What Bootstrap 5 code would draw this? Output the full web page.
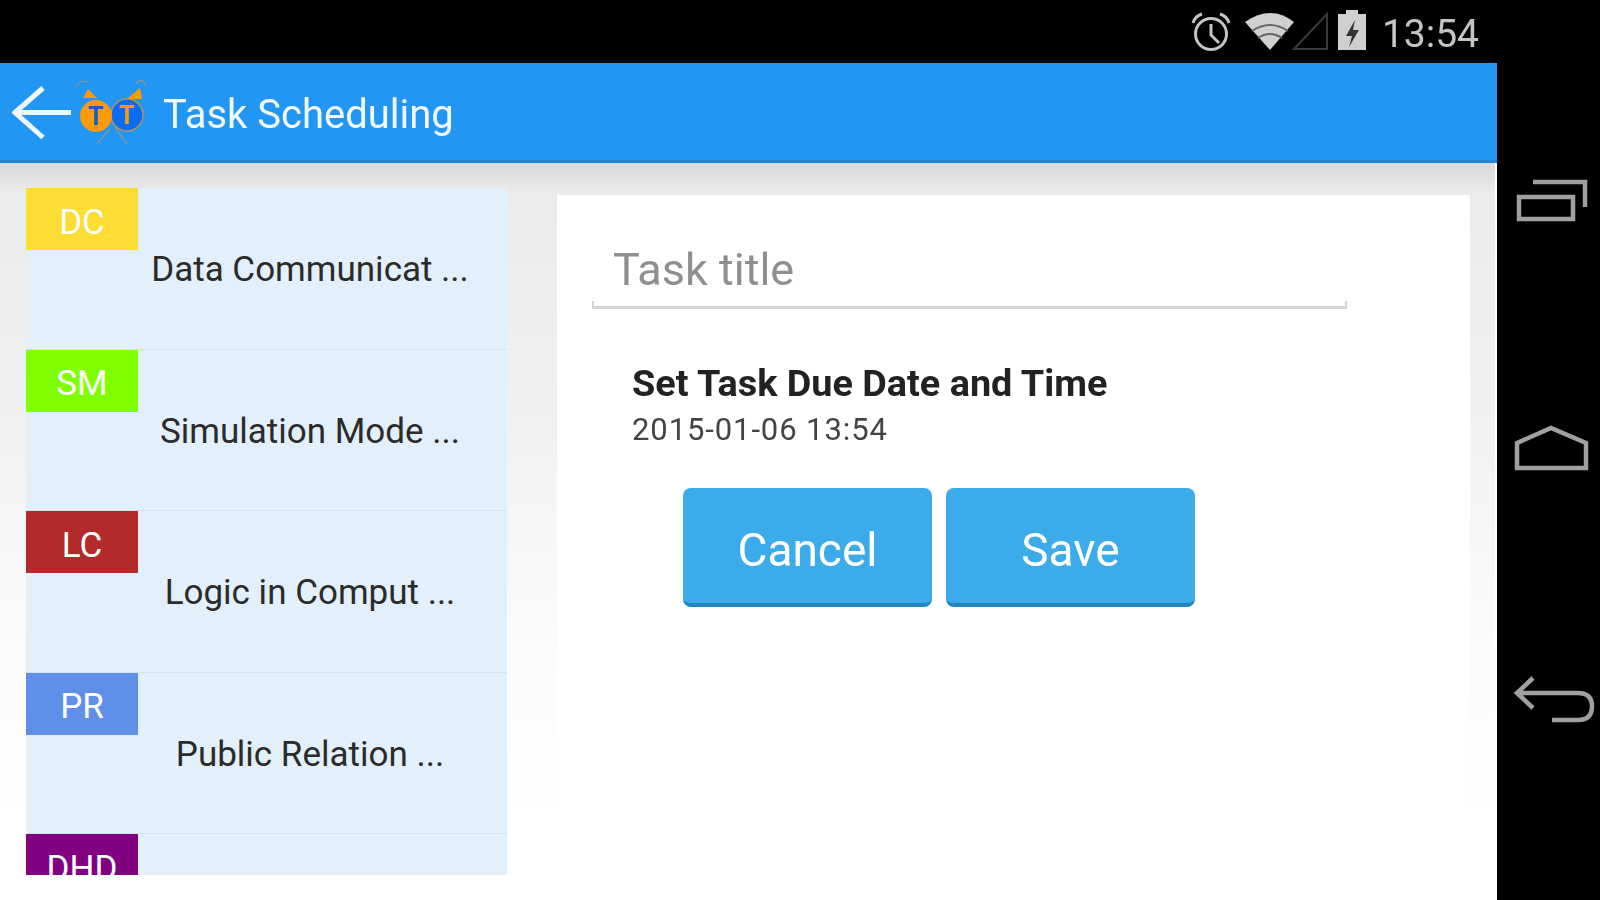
<!DOCTYPE html>
<html lang="en">
<head>
  <meta charset="UTF-8" />
  <title>Task Scheduling</title>
  <link href="https://cdn.jsdelivr.net/npm/bootstrap@5.3.0/dist/css/bootstrap.min.css" rel="stylesheet" />
  <style>
    body {
      background-color: #000;
      font-family: Roboto, "Liberation Sans", sans-serif;
      overflow: hidden;
    }
    .device-shell { filter: blur(.6px); }
    .device-col { width: 1497px; }
    .status-strip { height: 63px; padding-right: 18px; color: #c4c4c4; font-size: 39px; }
    .status-strip svg { margin-top: 3px; }
    .status-strip .clock { margin-left: 12px; padding-top: 5px; }
    .app-bar { height: 100px; background-color: #2196f3; padding: 0 !important; box-shadow: inset 0 -3px 0 #1c85dc; }
    .back-arrow { margin-left: 12px; }
    .app-logo { margin-left: 2px; }
    .app-title { color: #f2f8fe; font-size: 40px; margin-left: 11px; padding-top: 3px; }
    .screen-body {
      height: 737px;
      padding: 25px 25px 0 26px;
      gap: 50px;
      border-right: 2px solid #fff;
      background: linear-gradient(#d9d9d9 0, #ebebeb 30px, #f1f1f1 250px, #fbfbfb 480px, #fff 640px);
    }
    .course-list { width: 481px; height: 687px; overflow: hidden; background-color: #e1f0fb; flex: none; }
    .course-row {
      height: 161.5px;
      flex: none;
      background-color: #e1f0fb;
      border: 0;
      border-bottom: 2px solid #d5e2ea;
      padding: 0;
      color: #2b2b2b;
      font-size: 35px;
    }
    .course-code { width: 112px; height: 62px; padding-top: 6px; color: #fff; font-size: 35px; line-height: 1; flex: none; }
    .course-name { padding: 4px 25px 0 0; }
    .code-dc { background-color: #fddc33; }
    .code-sm { background-color: #80ff00; }
    .code-lc { background-color: #b22a2a; }
    .code-pr { background-color: #5f8fe8; }
    .code-dhd { background-color: #800080; }
    .task-panel { padding: 30px 0 0 35px; margin-top: 7px; border-radius: 0; border: 0; }
    .title-field {
      width: 755px;
      height: 84px;
      padding: 8px 0 0 21px;
      font-size: 45px;
      color: #333;
      border: 0;
      border-bottom: 3px solid #d4d4d4;
      border-radius: 0;
      background:
        linear-gradient(#d4d4d4, #d4d4d4) left bottom / 2px 5px no-repeat,
        linear-gradient(#d4d4d4, #d4d4d4) right bottom / 2px 5px no-repeat;
    }
    .title-field::placeholder { color: #8f8f8f; opacity: 1; }
    .due-block { padding: 49px 0 0 40px; }
    .due-label { font-size: 37.8px; font-weight: 700; color: #222; line-height: 50px; }
    .due-value { font-size: 31px; color: #444; line-height: 44px; letter-spacing: .9px; }
    .action-row { padding: 36px 0 0 91px; gap: 14px; }
    .action-btn {
      width: 249px;
      height: 119px;
      background-color: #3babe9;
      border: 0;
      border-bottom: 4px solid #1f86bf;
      border-radius: 8px;
      color: #fff;
      font-size: 46px;
      padding: 10px 0 0;
    }
    .nav-rail { width: 103px; gap: 202px; padding-bottom: 3px; }
    .nav-rail svg { display: block; }
  </style>
</head>
<body>
  <div class="device-shell d-flex vh-100">
    <div class="device-col d-flex flex-column flex-shrink-0">

      <div class="status-strip d-flex justify-content-end align-items-center">
        <svg width="180" height="50" viewBox="1190 8 180 50" fill="none">
          <!-- alarm -->
          <g stroke="#c4c4c4">
            <circle cx="1211" cy="34" r="15.5" stroke-width="3" />
            <path d="M1211 24v11l8 8" stroke-width="3" />
            <path d="M1193 23q2-7 9-9M1229 23q-2-7-9-9" stroke-width="3" />
          </g>
          <!-- wifi -->
          <path d="M1245 22q26-18 49 0l-24 28z" fill="#d0d0d0" />
          <path d="M1252 31q18-12 36 0M1258 38q12-8 24 0" stroke="#666" stroke-width="2" />
          <!-- signal -->
          <path d="M1294 49l33-35v35z" stroke="#3a3a3a" stroke-width="2" />
          <!-- battery -->
          <path d="M1338 14h8v-4h12v4h8v36h-28z" fill="#cfcfcf" />
          <path d="M1355 20l-9 16h6l-3 11 10-17h-6z" fill="#333" />
        </svg>
        <span class="clock">13:54</span>
      </div>

      <nav class="navbar app-bar flex-nowrap justify-content-start">
        <svg class="back-arrow" width="60" height="56" viewBox="14 85 60 56" fill="none" stroke="#eef6fe" stroke-width="5">
          <path d="M45 88l-28 24.500 28 25M17 112.500h56" />
        </svg>
        <svg class="app-logo" width="78" height="70" viewBox="74 76 78 70">
          <path d="M76 85q5-8 12-5M146 84l-4-6-6 3M97 142l13-15M127 142l-12-17" fill="none" stroke="#a9926f" stroke-opacity=".7" stroke-width="1.500" />
          <path d="M83 96l5-9 9 9z" fill="#f90" />
          <path d="M127 97l13-11 2 11z" fill="#f90" />
          <circle cx="127" cy="113" r="16" fill="#0a6cf0" stroke="#b88f5a" stroke-width="1.500" />
          <circle cx="96" cy="114" r="16" fill="#f99b0d" />
          <text x="96" y="123" text-anchor="middle" font-family="Roboto, sans-serif" font-size="25" font-weight="700" fill="#125fc0">T</text>
          <text x="127" y="122" text-anchor="middle" font-family="Roboto, sans-serif" font-size="25" font-weight="700" fill="#f99b0d">T</text>
        </svg>
        <span class="app-title">Task Scheduling</span>
      </nav>

      <div class="screen-body d-flex">
        <div class="course-list list-group list-group-flush rounded-0 flex-nowrap">
          <div class="list-group-item course-row d-flex">
            <div class="course-code code-dc d-flex align-items-center justify-content-center">DC</div>
            <div class="course-name flex-grow-1 text-center align-self-center">Data Communicat ...</div>
          </div>
          <div class="list-group-item course-row d-flex">
            <div class="course-code code-sm d-flex align-items-center justify-content-center">SM</div>
            <div class="course-name flex-grow-1 text-center align-self-center">Simulation Mode ...</div>
          </div>
          <div class="list-group-item course-row d-flex">
            <div class="course-code code-lc d-flex align-items-center justify-content-center">LC</div>
            <div class="course-name flex-grow-1 text-center align-self-center">Logic in Comput ...</div>
          </div>
          <div class="list-group-item course-row d-flex">
            <div class="course-code code-pr d-flex align-items-center justify-content-center">PR</div>
            <div class="course-name flex-grow-1 text-center align-self-center">Public Relation ...</div>
          </div>
          <div class="list-group-item course-row d-flex">
            <div class="course-code code-dhd d-flex align-items-center justify-content-center">DHD</div>
          </div>
        </div>

        <div class="task-panel card flex-grow-1">
          <input class="form-control shadow-none title-field" type="text" placeholder="Task title" />
          <div class="due-block">
            <div class="due-label">Set Task Due Date and Time</div>
            <div class="due-value">2015-01-06 13:54</div>
          </div>
          <div class="action-row d-flex">
            <button type="button" class="btn action-btn">Cancel</button>
            <button type="button" class="btn action-btn">Save</button>
          </div>
        </div>
      </div>
    </div>

    <div class="nav-rail d-flex flex-column justify-content-center">
      <svg width="103" height="48" viewBox="1497 175 103 48" fill="none" stroke="#a0a0a0" stroke-width="4.500">
        <path d="M1519 197h54v22h-54zM1533 182h52v25" />
      </svg>
      <svg width="103" height="48" viewBox="1497 424 103 48" fill="none" stroke="#a0a0a0" stroke-width="4.500">
        <path d="M1517 442l34-15 35 15v25h-69z" />
      </svg>
      <svg width="103" height="48" viewBox="1497 675 103 48" fill="none" stroke="#a0a0a0" stroke-width="4.500">
        <path d="M1533 678l-16 15 16 15M1517 693h61q14 0 14 13.500t-14 13.500h-26" />
      </svg>
    </div>
  </div>
  <script src="https://cdn.jsdelivr.net/npm/bootstrap@5.3.0/dist/js/bootstrap.bundle.min.js"></script>
</body>
</html>
